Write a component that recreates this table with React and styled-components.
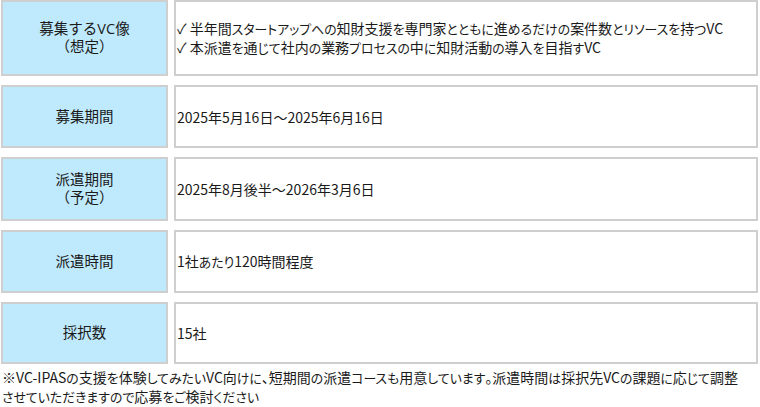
import React from "react";
import styled, { createGlobalStyle } from "styled-components";

const Global = createGlobalStyle`
  html, body { margin: 0; padding: 0; background: #ffffff; }
  body {
    font-family: "Noto Sans CJK JP", "Noto Sans", sans-serif;
    color: #1a1a1a;
  }
`;

const Page = styled.div`
  width: 760px;
  height: 407px;
  box-sizing: border-box;
  padding: 0 2px 0 1px;
  display: flex;
  flex-direction: column;
  gap: 9px;
`;

const Row = styled.div`
  display: grid;
  grid-template-columns: 167px 1fr;
  column-gap: 6px;
  height: ${(p) => p.$h}px;
`;

const Label = styled.div`
  background: #bfe9fc;
  border: 2px solid #cfcfcf;
  box-sizing: border-box;
  display: flex;
  flex-direction: column;
  align-items: center;
  justify-content: center;
  text-align: center;
  font-family: "Open Sans", "Noto Sans CJK JP", sans-serif;
  font-size: 14.5px;
  line-height: 18px;
`;

const Value = styled.div`
  background: #ffffff;
  border: 2px solid #cfcfcf;
  box-sizing: border-box;
  display: flex;
  flex-direction: column;
  justify-content: center;
  padding-left: 1px;
  font-size: 14px;
  line-height: 18px;
  font-feature-settings: "palt" 1;
`;

const Line = styled.div`
  white-space: nowrap;
`;

const Kana = styled.span`
  font-size: 0.92em;
`;

const Note = styled.div`
  margin-top: -5px;
  padding-left: 1px;
  font-size: 14px;
  line-height: 18px;
  font-feature-settings: "palt" 1;
`;

function Jp({ text }) {
  return text
    .split(/([\u3040-\u30ff]+)/)
    .map((p, i) =>
      /^[\u3040-\u30ff]+$/.test(p) ? (
        <Kana key={i}>{p}</Kana>
      ) : (
        <React.Fragment key={i}>{p}</React.Fragment>
      )
    );
}

const rows = [
  {
    h: 76,
    label: ["募集するVC像", "（想定）"],
    value: [
      "✓ 半年間スタートアップへの知財支援を専門家とともに進めるだけの案件数とリソースを持つVC",
      "✓ 本派遣を通じて社内の業務プロセスの中に知財活動の導入を目指すVC",
    ],
  },
  { h: 63, label: ["募集期間"], value: ["2025年5月16日～2025年6月16日"] },
  { h: 64, label: ["派遣期間", "（予定）"], value: ["2025年8月後半～2026年3月6日"] },
  { h: 63, label: ["派遣時間"], value: ["1社あたり120時間程度"] },
  { h: 62, label: ["採択数"], value: ["15社"] },
];

export default function App() {
  return (
    <>
      <Global />
      <Page>
        {rows.map((r, i) => (
          <Row key={i} $h={r.h}>
            <Label>
              {r.label.map((t, j) => (
                <Line key={j}>{t}</Line>
              ))}
            </Label>
            <Value>
              {r.value.map((t, j) => (
                <Line key={j}>
                  <Jp text={t} />
                </Line>
              ))}
            </Value>
          </Row>
        ))}
        <Note>
          <Line>
            <Jp text="※VC-IPASの支援を体験してみたいVC向けに、短期間の派遣コースも用意しています。派遣時間は採択先VCの課題に応じて調整" />
          </Line>
          <Line>
            <Jp text="させていただきますので応募をご検討ください" />
          </Line>
        </Note>
      </Page>
    </>
  );
}
